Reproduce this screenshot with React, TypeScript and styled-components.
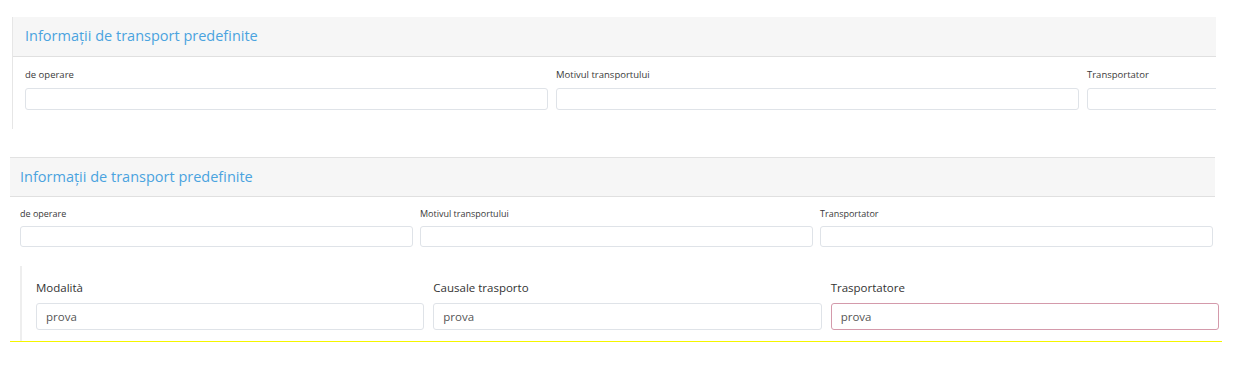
import styled, { createGlobalStyle } from 'styled-components';

const GlobalStyle = createGlobalStyle`
  body {
    margin: 0;
    background: #ffffff;
    font-family: "Open Sans", "Noto Sans", sans-serif;
    color: #333;
  }
`;

const Page = styled.div`
  width: 1245px;
  height: 370px;
  overflow: hidden;
  padding-top: 17px;
  box-sizing: border-box;
`;

const Panel = styled.div<{ $left: number; $width: number; $sideBorder?: boolean; $topBorder?: boolean }>`
  margin-left: ${(p) => p.$left}px;
  width: ${(p) => p.$width}px;
  border-left: ${(p) => (p.$sideBorder ? '1px solid #e6e6e6' : 'none')};
  border-top: ${(p) => (p.$topBorder ? '1px solid #e2e2e2' : 'none')};
  overflow: hidden;
  box-sizing: border-box;
`;

const PanelHeader = styled.div<{ $pad: number; $height: number; $lift: number }>`
  height: ${(p) => p.$height}px;
  display: flex;
  align-items: center;
  padding-left: ${(p) => p.$pad}px;
  padding-bottom: ${(p) => p.$lift}px;
  background: #f6f6f6;
  border-bottom: 1px solid #e0e0e0;
  box-sizing: border-box;
`;

const Title = styled.h3`
  margin: 0;
  font-size: 14.5px;
  font-weight: 400;
  color: #4aa3df;
  white-space: nowrap;
`;

const FieldGrid = styled.div<{ $pad: number; $col: number; $gap: number }>`
  display: grid;
  grid-template-columns: repeat(3, ${(p) => p.$col}px);
  column-gap: ${(p) => p.$gap}px;
  padding: 0 0 0 ${(p) => p.$pad}px;
`;

const Field = styled.div`
  display: flex;
  flex-direction: column;
`;

const SmallLabel = styled.label<{ $size: number; $top: number; $gap: number }>`
  font-size: ${(p) => p.$size}px;
  color: #3a3a3a;
  line-height: 14px;
  margin-top: ${(p) => p.$top}px;
  margin-bottom: ${(p) => p.$gap}px;
  white-space: nowrap;
`;

const Box = styled.input<{ $height: number }>`
  height: ${(p) => p.$height}px;
  border: 1px solid #dfe3e8;
  border-radius: 3px;
  background: #fff;
  box-sizing: border-box;
  padding: 0 8px;
  font-family: inherit;
  outline: none;
`;

const Spacer = styled.div<{ $h: number }>`
  height: ${(p) => p.$h}px;
`;

const Outer = styled.div`
  margin-left: 10px;
  width: 1212px;
  border-bottom: 1px solid #f5f500;
`;

const Inner = styled.div`
  margin-left: 10px;
  margin-top: 19px;
  border-left: 2px solid #eeeeee;
  padding: 14px 0 11px 14px;
  width: 1183px;
  display: grid;
  grid-template-columns: repeat(3, 1fr);
  column-gap: 9px;
`;

const BigLabel = styled.label`
  font-size: 11.5px;
  color: #333;
  line-height: 16px;
  margin-bottom: 7px;
`;

const ValueBox = styled.input<{ $active?: boolean }>`
  height: 27px;
  border: 1px solid ${(p) => (p.$active ? '#d49aab' : '#dfe3e8')};
  border-radius: 3px;
  padding: 0 9px;
  font-family: "Open Sans", "Noto Sans", sans-serif;
  font-size: 11.5px;
  color: #555;
  box-sizing: border-box;
  outline: none;
  background: #fff;
`;

const first = ['de operare', 'Motivul transportului', 'Transportator'];
const second = [
  { label: 'Modalità', value: 'prova' },
  { label: 'Causale trasporto', value: 'prova' },
  { label: 'Trasportatore', value: 'prova', active: true },
];

const App = () => {
  return (
    <>
      <GlobalStyle />
      <Page>
        <Panel $left={12} $width={1204} $sideBorder>
          <PanelHeader $pad={12} $height={40} $lift={3}>
            <Title>Informații de transport predefinite</Title>
          </PanelHeader>
          <FieldGrid $pad={12} $col={523} $gap={8}>
            {first.map((l) => (
              <Field key={l}>
                <SmallLabel $size={9.5} $top={11} $gap={6}>{l}</SmallLabel>
                <Box $height={22} readOnly />
              </Field>
            ))}
          </FieldGrid>
          <Spacer $h={19} />
        </Panel>
        <Spacer $h={28} />
        <Panel $left={10} $width={1205} $topBorder>
          <PanelHeader $pad={10} $height={39} $lift={1}>
            <Title>Informații de transport predefinite</Title>
          </PanelHeader>
          <FieldGrid $pad={10} $col={393} $gap={7}>
            {first.map((l) => (
              <Field key={l}>
                <SmallLabel $size={9} $top={10} $gap={5}>{l}</SmallLabel>
                <Box $height={21} readOnly />
              </Field>
            ))}
          </FieldGrid>
        </Panel>
        <Outer>
          <Inner>
            {second.map((f) => (
              <Field key={f.label}>
                <BigLabel>{f.label}</BigLabel>
                <ValueBox $active={f.active} defaultValue={f.value} readOnly />
              </Field>
            ))}
          </Inner>
        </Outer>
      </Page>
    </>
  );
};

export default App;
